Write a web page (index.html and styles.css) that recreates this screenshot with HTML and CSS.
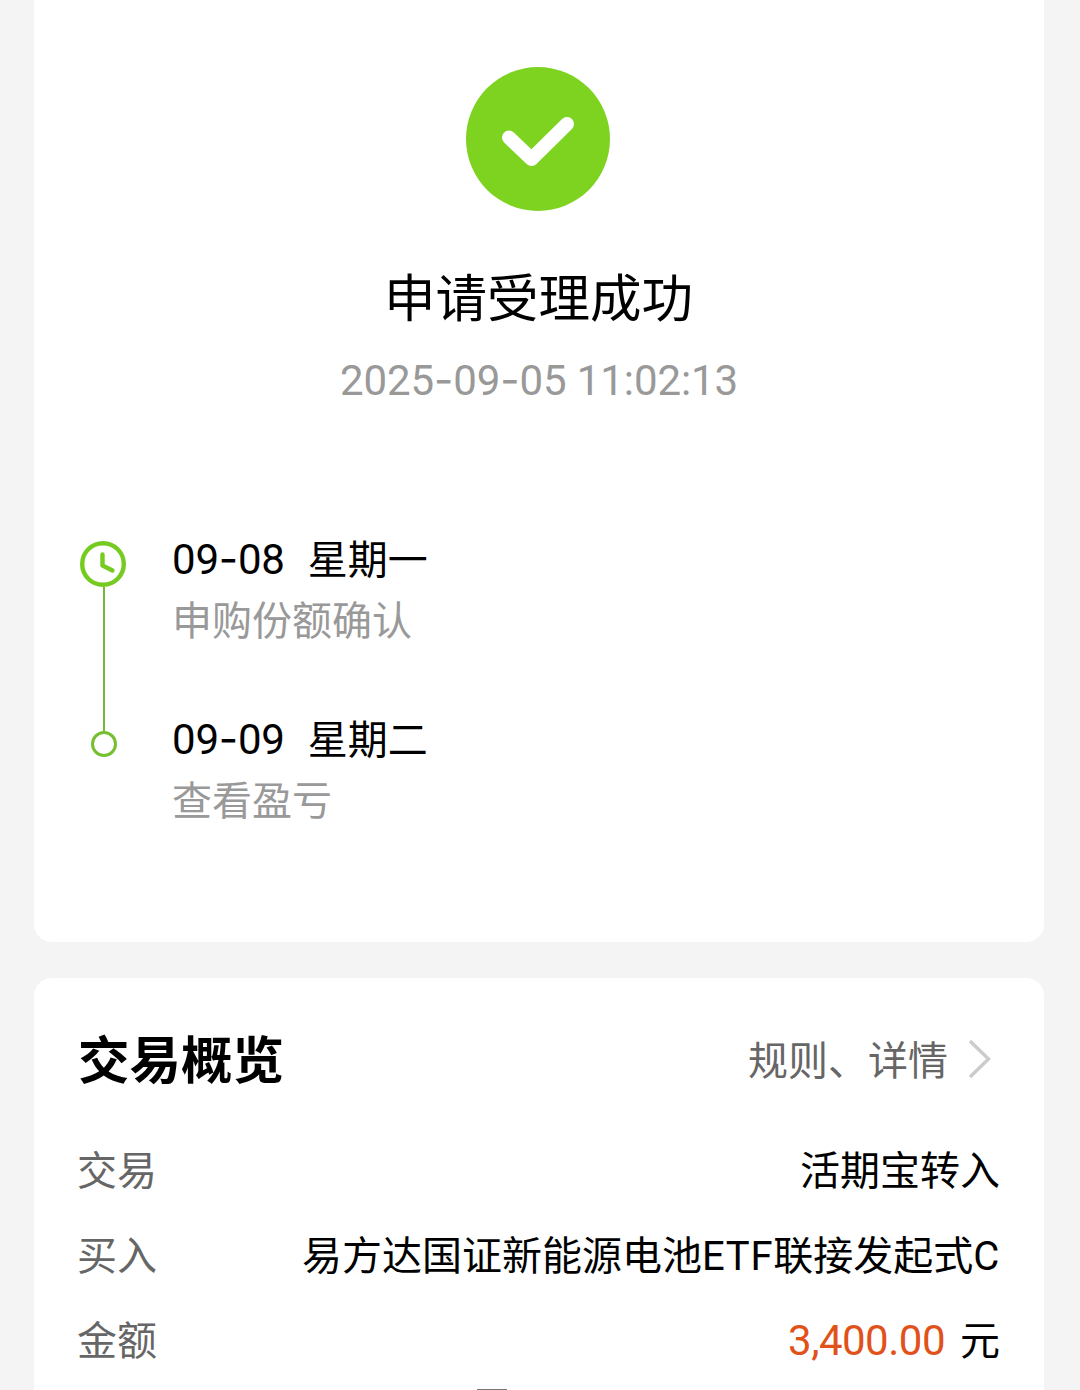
FILE: index.html
```html
<!DOCTYPE html>
<html lang="zh-CN">
<head>
    <meta charset="utf-8">
    <meta name="viewport" content="width=device-width, initial-scale=1.0">
    <title>申请受理成功</title>
    <link rel="stylesheet" href="styles.css">
</head>
<body>
    <div class="page">
        <section class="card result-card">
            <svg class="success-icon" viewBox="0 0 144 144">
                <circle cx="72" cy="72" r="72" fill="#7ed321"/>
                <path d="M43 70.500L65.500 92L101 57" fill="none" stroke="#fff" stroke-width="14" stroke-linecap="round" stroke-linejoin="round"/>
            </svg>
            <h1 class="result-title">申请受理成功</h1>
            <p class="result-time num">2025<span class="dash">-</span>09<span class="dash">-</span>05 11:02:13</p>

            <div class="timeline">
                <div class="timeline-axis">
                    <svg class="clock-icon" viewBox="0 0 46 46" fill="none" stroke="#76cb20">
                        <circle cx="23" cy="23" r="20.800" stroke-width="4.400"/>
                        <path d="M22.500 13.500V24.500L32.500 29.500" stroke-width="4.400" stroke-linecap="round" stroke-linejoin="round"/>
                    </svg>
                    <div class="timeline-line"></div>
                    <div class="timeline-dot"></div>
                </div>
                <div class="timeline-list">
                    <div class="timeline-item">
                        <div class="timeline-date"><span class="num">09<span class="dash">-</span>08</span><span class="weekday">星期一</span></div>
                        <div class="timeline-desc">申购份额确认</div>
                    </div>
                    <div class="timeline-item">
                        <div class="timeline-date"><span class="num">09<span class="dash">-</span>09</span><span class="weekday">星期二</span></div>
                        <div class="timeline-desc">查看盈亏</div>
                    </div>
                </div>
            </div>
        </section>

        <section class="card overview-card">
            <div class="overview-header">
                <h2 class="overview-title">交易概览</h2>
                <div class="overview-link">
                    <span class="overview-link-text">规则、详情</span>
                    <svg class="arrow-icon" viewBox="0 0 24 40">
                        <path d="M2 3L20.500 21L2 39" fill="none" stroke="#ccc" stroke-width="3.500"/>
                    </svg>
                </div>
            </div>
            <div class="row">
                <span class="row-label">交易</span>
                <span class="row-value">活期宝转入</span>
            </div>
            <div class="row">
                <span class="row-label">买入</span>
                <span class="row-value">易方达国证新能源电池<span class="latin">ETF</span>联接发起式<span class="latin">C</span></span>
            </div>
            <div class="row">
                <span class="row-label">金额</span>
                <span class="row-value"><span class="amount num">3,400.00</span>元</span>
            </div>
            <div class="more-edge"></div>
        </section>
    </div>
</body>
</html>
```

FILE: styles.css
```css
* {
    box-sizing: border-box;
}

body {
    margin: 0;
    background-color: #f4f4f4;
    color: #000;
    font-family: "Noto Sans CJK SC", sans-serif;
    font-size: 40px;
    line-height: 60px;
}

h1, h2, p {
    margin: 0;
}

.page {
    display: flex;
    flex-direction: column;
    gap: 36px;
    height: 1390px;
    padding: 0 36px 0 34px;
    overflow: hidden;
}

.card {
    flex-shrink: 0;
    background-color: #fff;
}

.num {
    font-family: Roboto, sans-serif;
    font-size: 42px;
    letter-spacing: -0.2px;
}

.dash {
    font-family: Inter, sans-serif;
}

/* Resultado */
.result-card {
    display: flex;
    flex-direction: column;
    align-items: center;
    height: 942px;
    padding: 67px 45px 0;
    border-radius: 0 0 18px 18px;
}

.success-icon {
    width: 144px;
    height: 144px;
    margin-right: 2px;
}

.result-title {
    margin-top: 44px;
    margin-right: 1px;
    font-size: 51.5px;
    font-weight: 400;
    line-height: 80px;
}

.result-time {
    margin-top: 15px;
    color: #999;
    letter-spacing: -0.1px;
}

.timeline {
    display: flex;
    align-self: stretch;
    gap: 45px;
    margin-top: 118px;
}

.timeline-axis {
    display: flex;
    flex-direction: column;
    align-items: center;
    width: 48px;
    padding-top: 12px;
}

.clock-icon {
    width: 46px;
    height: 46px;
}

.timeline-line {
    width: 2px;
    height: 144px;
    margin-left: 2px;
    background-color: #76b83a;
}

.timeline-dot {
    width: 26px;
    height: 26px;
    margin-left: 1px;
    border: 3px solid #76bf30;
    border-radius: 50%;
}

.timeline-item {
    height: 180px;
}

.timeline-date {
    display: flex;
    gap: 23px;
}

.weekday {
    line-height: 56px;
}

.timeline-desc {
    color: #999;
    line-height: 56px;
}

/* Resumen */
.overview-card {
    height: 460px;
    padding: 41px 44px 0;
    border-radius: 18px 18px 0 0;
}

.overview-header {
    display: flex;
    align-items: center;
    justify-content: space-between;
    height: 78px;
    margin-bottom: 29px;
}

.overview-title {
    font-size: 51.5px;
    font-weight: 700;
    line-height: 64px;
    padding-bottom: 3px;
}

.overview-link {
    display: flex;
    align-items: center;
    gap: 20px;
    padding-right: 8px;
    color: #666;
}

.overview-link-text {
    line-height: 58px;
}

.arrow-icon {
    width: 24px;
    height: 40px;
}

.row {
    display: flex;
    justify-content: space-between;
    height: 85px;
    line-height: 85px;
}

.row-label {
    margin-left: -1px;
    color: #666;
}

.latin {
    font-family: Roboto, sans-serif;
    letter-spacing: 0.7px;
}

.amount {
    margin-right: 15px;
    color: #e1521b;
    letter-spacing: -0.5px;
}

.more-edge {
    width: 30px;
    height: 2px;
    margin: 8px 0 0 399px;
    background-color: #777;
}
```
